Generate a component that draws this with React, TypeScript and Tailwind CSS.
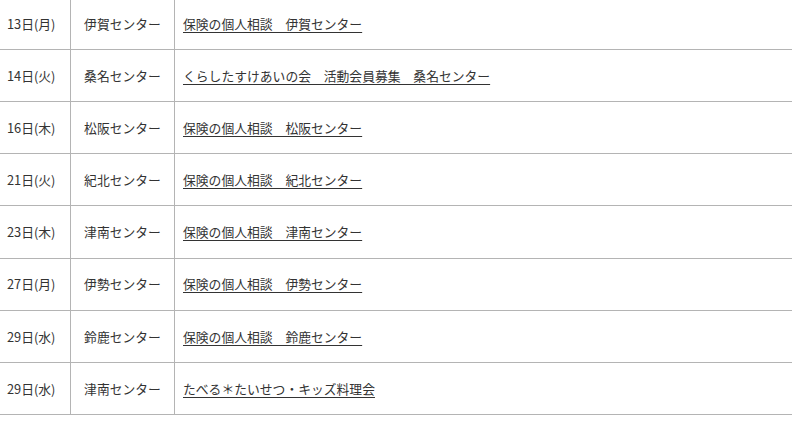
import React from 'react';

interface EventRow {
  date: string;
  center: string;
  title: string;
}

const rows: EventRow[] = [
  { date: '13日(月)', center: '伊賀センター', title: '保険の個人相談　伊賀センター' },
  { date: '14日(火)', center: '桑名センター', title: 'くらしたすけあいの会　活動会員募集　桑名センター' },
  { date: '16日(木)', center: '松阪センター', title: '保険の個人相談　松阪センター' },
  { date: '21日(火)', center: '紀北センター', title: '保険の個人相談　紀北センター' },
  { date: '23日(木)', center: '津南センター', title: '保険の個人相談　津南センター' },
  { date: '27日(月)', center: '伊勢センター', title: '保険の個人相談　伊勢センター' },
  { date: '29日(水)', center: '鈴鹿センター', title: '保険の個人相談　鈴鹿センター' },
  { date: '29日(水)', center: '津南センター', title: 'たべる＊たいせつ・キッズ料理会' },
];

export default function App() {
  return (
    <div
      className="w-[792px] h-[421px] overflow-hidden bg-white text-[#333] text-[12.8px]"
      style={{ fontFamily: '"Noto Sans CJK JP", "Noto Sans", sans-serif' }}
    >
      <div className="-mt-[2.14px]">
        {rows.map((row, i) => (
          <div
            key={i}
            className="flex h-[52.14px] border-b border-[#b4b4b4]"
          >
            <div className="w-[71px] shrink-0 flex items-center pl-[7px] border-r border-[#b4b4b4]">
              {row.date}
            </div>
            <div className="w-[104px] shrink-0 flex items-center justify-center border-r border-[#b4b4b4]">
              {row.center}
            </div>
            <div className="flex-1 flex items-center pl-[8px]">
              <a href="#" className="underline underline-offset-[3px] decoration-[#333]">
                {row.title}
              </a>
            </div>
          </div>
        ))}
      </div>
    </div>
  );
}
